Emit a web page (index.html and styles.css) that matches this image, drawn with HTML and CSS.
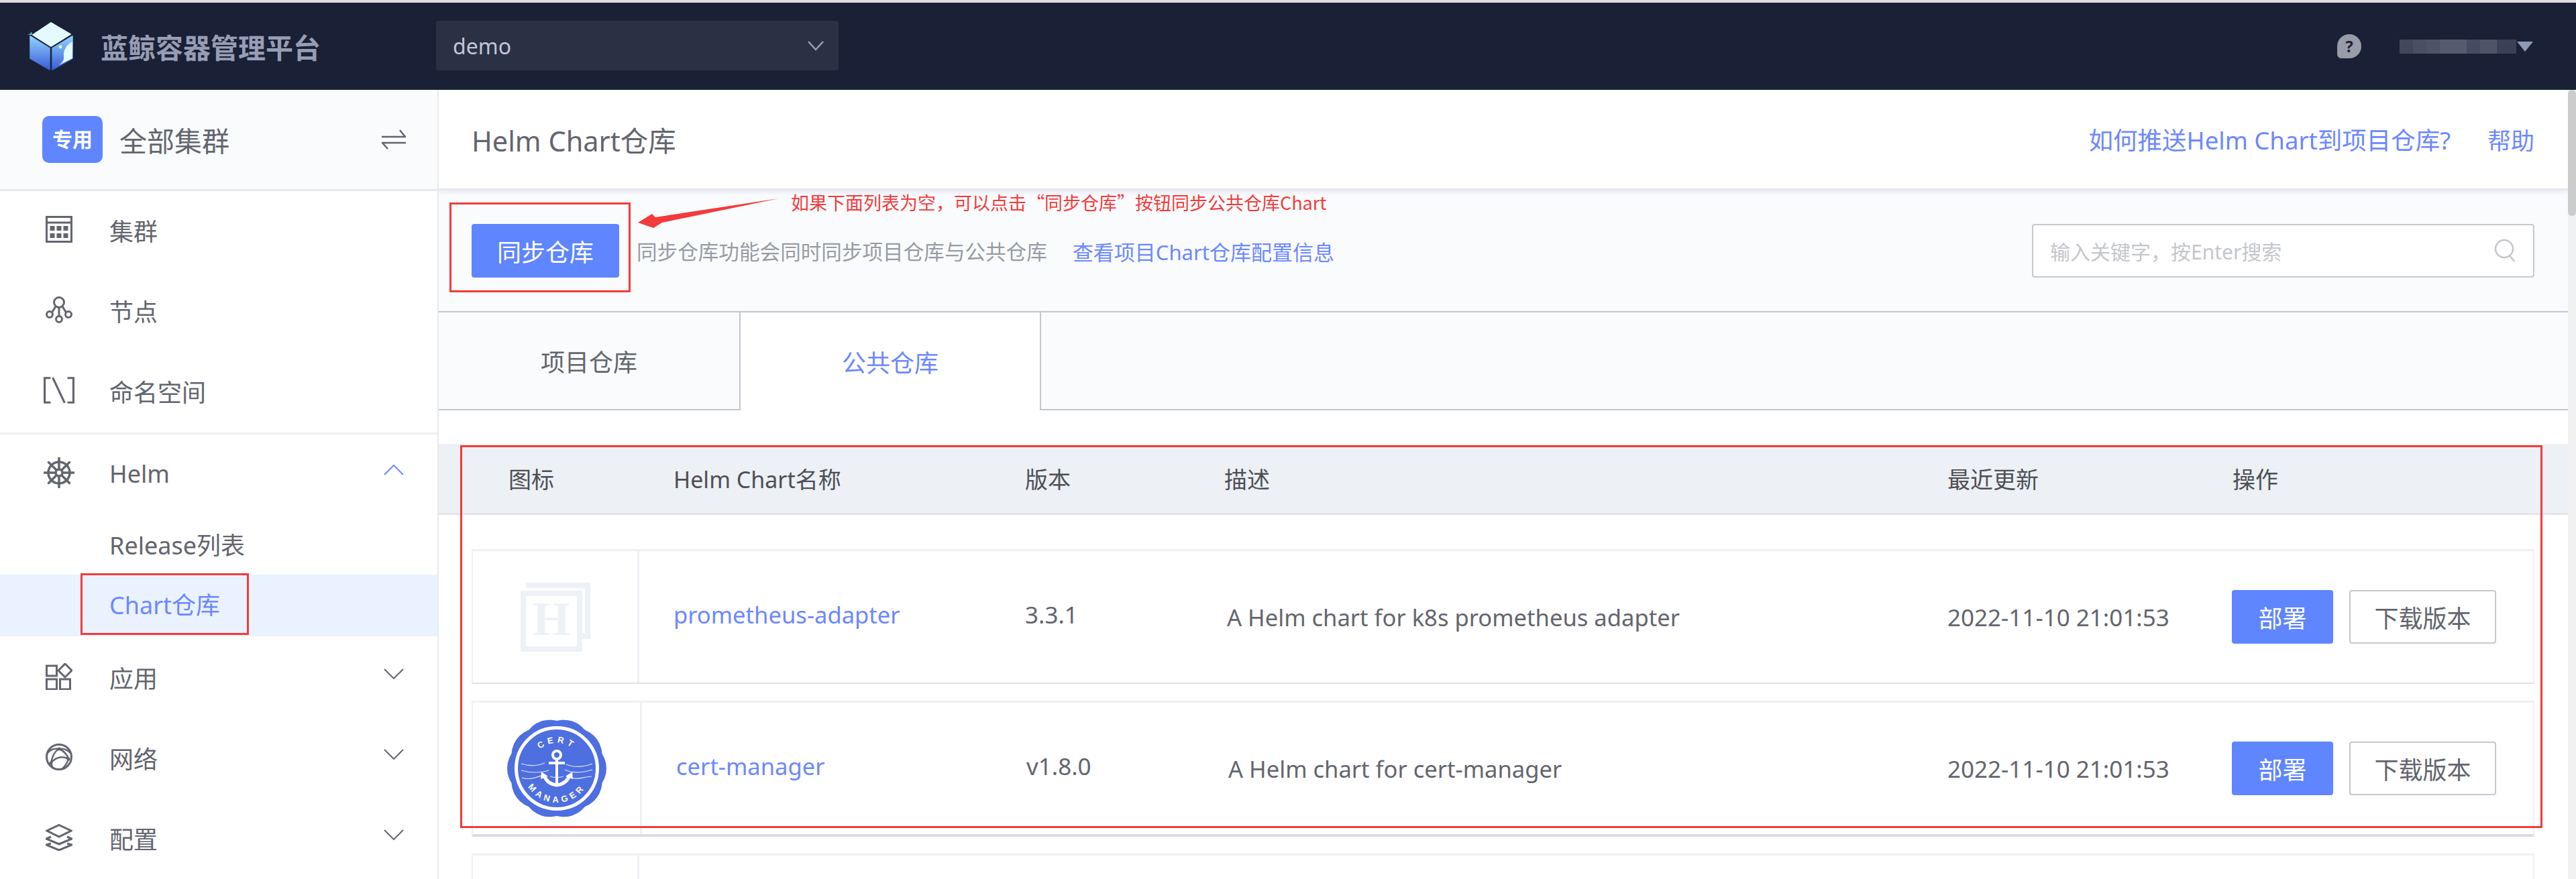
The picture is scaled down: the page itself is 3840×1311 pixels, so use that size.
FILE: index.html
```html
<!DOCTYPE html>
<html lang="zh-CN">
<head>
    <meta charset="UTF-8">
    <title>蓝鲸容器管理平台</title>
    <link rel="stylesheet" href="styles.css">
</head>
<body>

<div class="topstrip"></div>

<header class="topbar">
    <svg class="logo" viewBox="40 30 70 76">
        <defs>
            <linearGradient id="cubeLeft" x1="0" y1="0" x2="0" y2="1">
                <stop offset="0" stop-color="#8fd3ff"/>
                <stop offset="1" stop-color="#3a5cd8"/>
            </linearGradient>
        </defs>
        <path d="M76 34 L105 51 L76 69 L49 52 Z" fill="#e3fbff" stroke="#e3fbff" stroke-width="2" stroke-linejoin="round"/>
        <path d="M45 54 L74 72 L74 104 L45 87 Z" fill="url(#cubeLeft)" stroke="url(#cubeLeft)" stroke-width="1.5" stroke-linejoin="round"/>
        <path d="M78 72 L108 54 L108 87 L78 104 Z" fill="url(#cubeLeft)" stroke="url(#cubeLeft)" stroke-width="1.5" stroke-linejoin="round"/>
        <path d="M108 62 C100 66 94 74 95 84 C96 90 92 94 88 97 L108 87 Z" fill="#e3fbff"/>
        <circle cx="90" cy="70" r="2.4" fill="#e3fbff"/>
        <path d="M48 52 L41 52 L45 50 L47 47 Z" fill="#5fb4f0"/>
    </svg>
    <span class="brand">蓝鲸容器管理平台</span>
    <div class="project-select">
        <span>demo</span>
        <svg class="select-arrow" viewBox="0 0 26 16"><path d="M2 2 L13 14 L24 2" fill="none" stroke="#9aa1b5" stroke-width="2.5"/></svg>
    </div>
    <div class="topbar-right">
        <div class="help-icon">?</div>
        <div class="user-blur"></div>
        <div class="user-caret"></div>
    </div>
</header>

<div class="layout">
    <aside class="sidebar">
        <div class="cluster-switch">
            <span class="badge">专用</span>
            <span class="cluster-name">全部集群</span>
            <svg class="swap-icon" viewBox="0 0 36 30"><path d="M0 11 H35 L27 1 M36 20 H1 L9 29" fill="none" stroke="#63656e" stroke-width="2.5"/></svg>
        </div>
        <nav>
            <div class="nav-item">
                <svg class="nav-icon" viewBox="0 0 40 40">
                    <rect x="1.5" y="1.5" width="37" height="37" fill="none" stroke="#63656e" stroke-width="3"/>
                    <path d="M1 10 H39" stroke="#63656e" stroke-width="3"/>
                    <path d="M6.500 15 h7 v7 h-7z M16.500 15 h7 v7 h-7z M26.500 15 h7 v7 h-7z M6.500 26 h7 v7 h-7z M16.500 26 h7 v7 h-7z M26.500 26 h7 v7 h-7z" fill="#63656e"/>
                </svg>
                <span>集群</span>
            </div>
            <div class="nav-item">
                <svg class="nav-icon" viewBox="0 0 40 40">
                    <g fill="none" stroke="#63656e" stroke-width="3">
                        <circle cx="20" cy="9" r="7.500"/>
                        <circle cx="6" cy="27" r="4.500"/>
                        <circle cx="20" cy="34" r="4.500"/>
                        <circle cx="34" cy="27" r="4.500"/>
                        <path d="M20 16.500 V29.500 M15 15 L9.500 24 M25 15 L30.500 24"/>
                    </g>
                </svg>
                <span>节点</span>
            </div>
            <div class="nav-item">
                <svg class="nav-icon nav-icon-wide" viewBox="0 0 44 38">
                    <path d="M10 1.500 H1.500 V36.500 H10 M34 1.500 H42.500 V36.500 H34 M13 1 L30 37" fill="none" stroke="#63656e" stroke-width="3"/>
                </svg>
                <span>命名空间</span>
            </div>
            <div class="nav-group">
                <div class="nav-item">
                    <svg class="nav-icon nav-icon-wide" viewBox="0 0 46 46">
                        <g fill="none" stroke="#63656e" stroke-width="3.500" stroke-linecap="round">
                            <circle cx="23" cy="23" r="16"/>
                            <path d="M23 1 V17 M23 29 V45 M1 23 H17 M29 23 H45 M7.500 7.500 L19 19 M27 27 L38.500 38.500 M38.500 7.500 L27 19 M19 27 L7.500 38.500"/>
                            <circle cx="23" cy="23" r="5"/>
                        </g>
                    </svg>
                    <span>Helm</span>
                    <svg class="chevron" viewBox="0 0 30 16"><path d="M1 15 L15 1 L29 15" fill="none" stroke="#6c88ff" stroke-width="2"/></svg>
                </div>
                <div class="nav-sub">Release列表</div>
                <div class="nav-sub nav-sub-active">Chart仓库</div>
            </div>
            <div class="nav-item">
                <svg class="nav-icon" viewBox="0 0 40 40">
                    <g fill="none" stroke="#63656e" stroke-width="3">
                        <rect x="1.500" y="4" width="15" height="15"/>
                        <path d="M29 1 L39 11 L29 21 L19 11 Z"/>
                        <rect x="1.500" y="24" width="15" height="15"/>
                        <rect x="21.500" y="24" width="15" height="15"/>
                    </g>
                </svg>
                <span>应用</span>
                <svg class="chevron" viewBox="0 0 30 16"><path d="M1 1 L15 15 L29 1" fill="none" stroke="#63656e" stroke-width="2"/></svg>
            </div>
            <div class="nav-item">
                <svg class="nav-icon" viewBox="0 0 40 40">
                    <g fill="none" stroke="#63656e" stroke-width="3">
                        <circle cx="20" cy="20" r="18.500"/>
                        <path d="M8 29 C10 18 14 11 20 8 C27 11 32 16 34 23 C25 18 15 20 8 29 Z" stroke-width="2.500"/>
                        <path d="M3 14 C8 8 14 7 20 8 C25 7 31 8 37 14 M34 23 C32 30 28 35 23 39 M8 29 L10 35" stroke-width="2.500"/>
                    </g>
                    <g fill="#63656e">
                        <circle cx="20" cy="8" r="2.500"/>
                        <circle cx="8" cy="29" r="2.500"/>
                        <circle cx="34" cy="23" r="2.500"/>
                    </g>
                </svg>
                <span>网络</span>
                <svg class="chevron" viewBox="0 0 30 16"><path d="M1 1 L15 15 L29 1" fill="none" stroke="#63656e" stroke-width="2"/></svg>
            </div>
            <div class="nav-item">
                <svg class="nav-icon" viewBox="0 0 40 40">
                    <g fill="none" stroke="#63656e" stroke-width="3">
                        <path d="M20 1.500 L38 10 L20 19 L2 10 Z"/>
                        <path d="M8 19 L1 22 L20 30 L39 22 L32 19"/>
                        <path d="M8 29 L1 31 L20 39 L39 31 L32 29"/>
                    </g>
                </svg>
                <span>配置</span>
                <svg class="chevron" viewBox="0 0 30 16"><path d="M1 1 L15 15 L29 1" fill="none" stroke="#63656e" stroke-width="2"/></svg>
            </div>
        </nav>
    </aside>

    <main class="main">
        <div class="page-head">
            <h1>Helm Chart仓库</h1>
            <div class="head-links">
                <a class="head-link-long">如何推送Helm Chart到项目仓库?</a>
                <a>帮助</a>
            </div>
        </div>

        <div class="toolbar">
            <button class="btn btn-primary btn-sync">同步仓库</button>
            <span class="sync-tip">同步仓库功能会同时同步项目仓库与公共仓库</span>
            <a class="sync-link">查看项目Chart仓库配置信息</a>
            <div class="search">
                <span>输入关键字，按Enter搜索</span>
                <svg class="search-icon" viewBox="0 0 32 36"><circle cx="15" cy="15" r="13" fill="none" stroke="#c4c6cc" stroke-width="2.500"/><path d="M23 25 L30 34" stroke="#c4c6cc" stroke-width="2.500"/></svg>
            </div>
        </div>

        <div class="tabs">
            <div class="tab">项目仓库</div>
            <div class="tab tab-active">公共仓库</div>
        </div>

        <div class="table-head">
            <span>图标</span>
            <span>Helm Chart名称</span>
            <span>版本</span>
            <span>描述</span>
            <span>最近更新</span>
            <span>操作</span>
        </div>

        <div class="chart-row">
            <div class="cell-icon">
                <svg class="chart-placeholder" viewBox="0 0 104 103">
                    <path d="M12 8 V4 H100 V80 H92" fill="none" stroke="#eef1f6" stroke-width="8"/>
                    <rect x="4" y="16" width="84" height="83" fill="#fff" stroke="#eef1f6" stroke-width="8"/>
                    <text x="46" y="78" text-anchor="middle" class="placeholder-letter">H</text>
                </svg>
            </div>
            <a class="cell-name">prometheus-adapter</a>
            <span class="cell-version">3.3.1</span>
            <span class="cell-desc">A Helm chart for k8s prometheus adapter</span>
            <span class="cell-date">2022-11-10 21:01:53</span>
            <div class="cell-actions">
                <button class="btn btn-primary btn-deploy">部署</button>
                <button class="btn btn-plain">下载版本</button>
            </div>
        </div>

        <div class="chart-row chart-row-wide">
            <div class="cell-icon">
                <svg class="cert-logo" viewBox="-75 -75 150 150">
                    <defs>
                        <path id="arcTop" d="M-38 0 A38 38 0 0 1 38 0"/>
                        <path id="arcBottom" d="M-51 0 A51 51 0 0 0 51 0"/>
                    </defs>
                    <g fill="#4e6fe0">
                        <circle r="40" cx="34"/>
                        <circle r="40" cx="34" transform="rotate(36)"/>
                        <circle r="40" cx="34" transform="rotate(72)"/>
                        <circle r="40" cx="34" transform="rotate(108)"/>
                        <circle r="40" cx="34" transform="rotate(144)"/>
                        <circle r="40" cx="34" transform="rotate(180)"/>
                        <circle r="40" cx="34" transform="rotate(216)"/>
                        <circle r="40" cx="34" transform="rotate(252)"/>
                        <circle r="40" cx="34" transform="rotate(288)"/>
                        <circle r="40" cx="34" transform="rotate(324)"/>
                    </g>
                    <circle r="60.500" fill="none" stroke="#fff" stroke-width="5"/>
                    <g fill="none" stroke="#dfe6fb" stroke-width="1.200">
                        <path d="M-53 -7 C-40 -3 -30 -3 -18 -8 M14 -6 C26 -1 40 -2 53 -7"/>
                        <path d="M-53 3 C-40 7 -24 7 -12 3 M12 2 C24 8 40 6 53 2"/>
                        <path d="M-52 14 C-40 18 -30 13 -20 10 M-10 12 C-4 14 4 14 10 12 M22 14 C32 18 42 12 52 12"/>
                    </g>
                    <g fill="none" stroke="#fff" stroke-width="4">
                        <circle cx="0" cy="-20" r="6"/>
                        <path d="M0 -14 V25 M-12 -8 H12"/>
                        <path d="M-19 10 C-16 20 -8 24 0 25 C8 24 16 20 19 10" stroke-width="5"/>
                    </g>
                    <path d="M-23 5 L-13 12 L-24 16 Z M23 5 L13 12 L24 16 Z" fill="#fff"/>
                    <text class="cert-text"><textPath href="#arcTop" startOffset="50%" text-anchor="middle">CERT</textPath></text>
                    <text class="cert-text"><textPath href="#arcBottom" startOffset="50%" text-anchor="middle">MANAGER</textPath></text>
                </svg>
            </div>
            <a class="cell-name">cert-manager</a>
            <span class="cell-version">v1.8.0</span>
            <span class="cell-desc">A Helm chart for cert-manager</span>
            <span class="cell-date">2022-11-10 21:01:53</span>
            <div class="cell-actions">
                <button class="btn btn-primary btn-deploy">部署</button>
                <button class="btn btn-plain">下载版本</button>
            </div>
        </div>

        <div class="chart-row chart-row-cut">
            <div class="cell-icon"></div>
            <div class="cell-name"></div>
        </div>
    </main>

    <div class="scrollbar"><div class="scroll-thumb"></div></div>
</div>

<!-- red annotations drawn on top of the page -->
<div class="mark mark-sync"></div>
<div class="mark mark-menu"></div>
<div class="mark mark-table"></div>
<svg class="mark-arrow" viewBox="0 0 215 50"><path d="M211 1 L37 37 L24 45 L1 37 L22 24 L27 29 Z" fill="#f33b3b"/></svg>
<span class="mark-note">如果下面列表为空，可以点击“同步仓库”按钮同步公共仓库Chart</span>

</body>
</html>
```

FILE: styles.css
```css
* {
    box-sizing: border-box;
}
html, body {
    height: 100%;
}
body {
    margin: 0;
    display: flex;
    flex-direction: column;
    overflow: hidden;
    background-color: #fff;
    color: #63656e;
    font-family: "Noto Sans", "Noto Sans CJK SC", sans-serif;
    font-size: 35px;
}
a {
    color: #6c88ff;
}

.topstrip {
    height: 4px;
    background-color: #dcdee2;
}

/* top bar */
.topbar {
    height: 130px;
    display: flex;
    align-items: center;
    background-color: #1a2035;
    flex-shrink: 0;
}
.logo {
    width: 70px;
    height: 76px;
    margin: -2px 0 0 40px;
}
.brand {
    width: 500px;
    margin-left: 40px;
    font-size: 41px;
    font-weight: 700;
    color: #979db4;
    white-space: nowrap;
}
.project-select {
    width: 600px;
    height: 74px;
    margin-left: 0;
    margin-top: -2px;
    padding: 0 21px 0 25px;
    display: flex;
    align-items: center;
    justify-content: space-between;
    border-radius: 4px;
    background-color: #2a3145;
    color: #c0c6d8;
    font-size: 32px;
}
.select-arrow {
    width: 26px;
    height: 16px;
}
.topbar-right {
    margin-left: auto;
    padding-right: 64px;
    display: flex;
    align-items: center;
}
.help-icon {
    width: 36px;
    height: 36px;
    border-radius: 50% 50% 50% 6px;
    background-color: #989ba8;
    color: #1a2035;
    font-size: 24px;
    font-weight: 700;
    line-height: 36px;
    text-align: center;
}
.user-blur {
    width: 174px;
    height: 21px;
    margin-left: 57px;
    background: linear-gradient(90deg, #41485c 0 20px, #4a5064 20px 40px, #4e5468 40px 60px, #565c70 60px 100px, #454c62 100px 120px, #4f5568 120px 145px, #3a4156 145px 174px);
}
.user-caret {
    width: 0;
    height: 0;
    margin-left: 1px;
    border-left: 12px solid transparent;
    border-right: 12px solid transparent;
    border-top: 15px solid #8f9bb5;
}

.layout {
    flex: 1;
    display: flex;
    min-height: 0;
}

/* sidebar */
.sidebar {
    width: 654px;
    flex-shrink: 0;
    border-right: 2px solid #e8e9ee;
    font-size: 36px;
}
.cluster-switch {
    height: 151px;
    padding: 0 47px 0 63px;
    display: flex;
    align-items: center;
    background-color: #fafbfd;
    border-bottom: 3px solid #e6e8ef;
}
.badge {
    width: 90px;
    height: 70px;
    border-radius: 10px;
    background-color: #5f85ff;
    color: #fff;
    font-size: 30px;
    font-weight: 700;
    line-height: 70px;
    text-align: center;
}
.cluster-name {
    margin-left: 25px;
    font-size: 41px;
}
.swap-icon {
    width: 36px;
    height: 30px;
    margin-left: auto;
}
.nav-item {
    height: 120px;
    padding: 0 50px 4px 68px;
    display: flex;
    align-items: center;
}
.nav-icon {
    width: 40px;
    height: 40px;
    margin: -2px 55px 0 0;
    flex-shrink: 0;
}
.nav-icon-wide {
    width: 46px;
    height: 46px;
    margin: -2px 52px 0 -3px;
}
.chevron {
    width: 30px;
    height: 16px;
    margin: -10px 0 0 auto;
}
.nav-group {
    border-top: 3px solid #f0f0f4;
    padding-bottom: 3px;
}
.nav-sub {
    height: 89px;
    padding-left: 163px;
    line-height: 92px;
}
.nav-sub-active {
    height: 92px;
    background-color: #ebf2ff;
    color: #6c88ff;
}

/* right part */
.main {
    flex: 1;
    min-width: 0;
    overflow: hidden;
}
.page-head {
    height: 150px;
    padding: 0 50px 0 49px;
    display: flex;
    align-items: center;
    justify-content: space-between;
    border-bottom: 3px solid #e6e8ef;
    box-shadow: 0 3px 6px rgba(220, 222, 235, 0.5);
    position: relative;
}
.page-head h1 {
    margin: 0;
    font-size: 41.5px;
    font-weight: 400;
}
.head-links {
    display: flex;
    align-items: center;
    gap: 55px;
    font-size: 35px;
}
.head-link-long {
    font-size: 36.5px;
}
.toolbar {
    height: 180px;
    padding: 0 50px 0 49px;
    display: flex;
    align-items: center;
    background-color: #fafbfd;
    font-size: 30.6px;
}
.btn {
    height: 80px;
    border: none;
    border-radius: 4px;
    font-family: inherit;
    font-size: 36px;
    padding: 0;
}
.btn-primary {
    background-color: #5f85ff;
    color: #fff;
}
.btn-plain {
    width: 219px;
    margin-left: 24px;
    background-color: #fff;
    border: 2px solid #c5c8ce;
    color: #63656e;
}
.btn-sync {
    width: 220px;
}
.btn-deploy {
    width: 151px;
}
.sync-tip {
    margin-left: 26px;
    color: #979ba5;
}
.sync-link {
    margin-left: 38px;
    font-size: 31px;
}
.search {
    width: 749px;
    height: 80px;
    margin-left: auto;
    padding: 0 26px 0 25px;
    display: flex;
    align-items: center;
    justify-content: space-between;
    border: 2px solid #c5c8ce;
    border-radius: 4px;
    background-color: #fff;
    color: #c4c6cc;
    font-size: 30px;
}
.search-icon {
    width: 32px;
    height: 36px;
}
.tabs {
    height: 148px;
    display: flex;
    background-color: #fafbfd;
    border-top: 2px solid #c4c6cc;
    border-bottom: 2px solid #c4c6cc;
    font-size: 36px;
}
.tab {
    width: 450px;
    display: flex;
    align-items: center;
    justify-content: center;
    border-right: 2px solid #c4c6cc;
}
.tab-active {
    width: 448px;
    height: 146px;
    background-color: #fff;
    color: #6c88ff;
}
.table-head {
    height: 106px;
    margin-top: 50px;
    display: grid;
    grid-template-columns: 246px 524px 297px 1078px 425px 1fr;
    align-items: center;
    padding-left: 104px;
    background-color: #edf0f5;
    border-bottom: 3px solid #e4e5ea;
    color: #4d4f56;
    font-size: 34px;
}
.chart-row {
    height: 201px;
    margin: 51px 50px 0 49px;
    display: grid;
    grid-template-columns: 248px 575px 301px 1074px 424px 1fr;
    align-items: center;
    border-top: 3px solid #eef1f5;
    border-left: 2px solid #eef1f5;
    border-right: 2px solid #eef1f5;
    border-bottom: 2px solid #e1e2e8;
}
.chart-row-wide {
    height: 203px;
    margin-top: 25px;
    grid-template-columns: 252px 573px 301px 1072px 424px 1fr;
    border-bottom-width: 4px;
    border-bottom-color: #dcdde2;
}
.chart-row-cut {
    height: 120px;
    margin-top: 25px;
    border-bottom: none;
}
.cell-icon {
    height: 100%;
    display: flex;
    align-items: center;
    justify-content: center;
    border-right: 3px solid #eef1f5;
}
.chart-placeholder {
    width: 104px;
    height: 103px;
}
.placeholder-letter {
    font-family: "Liberation Serif", serif;
    font-size: 72px;
    font-weight: 700;
    fill: #eef1f6;
}
.cert-logo {
    width: 150px;
    height: 150px;
}
.cert-text {
    font-family: "Liberation Sans", sans-serif;
    font-size: 13px;
    font-weight: 700;
    letter-spacing: 5px;
    fill: #fff;
}
.cell-name {
    padding: 0 0 8px 51px;
    font-size: 34.6px;
}
.cell-version {
    padding-bottom: 8px;
}
.cell-desc {
    font-size: 34.6px;
}
.cell-date {
    white-space: nowrap;
}
.cell-actions {
    display: flex;
    white-space: nowrap;
}

.scrollbar {
    width: 12px;
    flex-shrink: 0;
    background-color: #f1f1f1;
}
.scroll-thumb {
    height: 188px;
    border-radius: 6px;
    background-color: #ccc;
}

/* annotations */
.mark {
    position: absolute;
    border: 3px solid #f33b3b;
}
.mark-sync {
    left: 670px;
    top: 302px;
    width: 270px;
    height: 134px;
}
.mark-menu {
    left: 120px;
    top: 855px;
    width: 251px;
    height: 92px;
}
.mark-table {
    left: 686px;
    top: 664px;
    width: 3104px;
    height: 571px;
}
.mark-arrow {
    position: absolute;
    left: 950px;
    top: 295px;
    width: 215px;
    height: 50px;
}
.mark-note {
    position: absolute;
    left: 1179px;
    top: 282px;
    color: #f33b3b;
    font-family: "Noto Sans CJK SC", sans-serif;
    font-size: 27px;
    white-space: nowrap;
}
```
